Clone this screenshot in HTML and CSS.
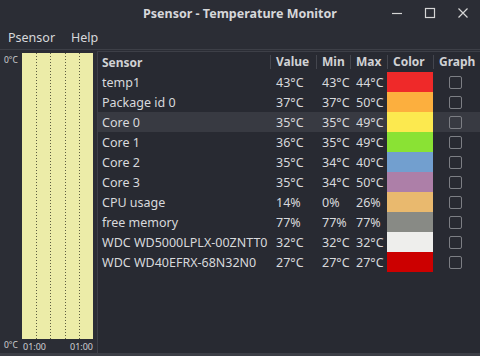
FILE: index.html
```html
<!DOCTYPE html>
<html>
<head>
<meta charset="utf-8">
<link rel="stylesheet" href="styles.css">
</head>
<body>
<div class="window">
  <div class="titlebar">
    <div></div>
    <div class="title">Psensor - Temperature Monitor</div>
    <div class="controls">
      <svg width="14" height="14" viewBox="0 0 14 14"><path d="M2 7.5h10" stroke="#d6d6d6" stroke-width="1.2"/></svg>
      <svg width="14" height="14" viewBox="0 0 14 14"><rect x="2.5" y="2.5" width="9" height="9" fill="none" stroke="#d6d6d6" stroke-width="1.2"/></svg>
      <svg width="14" height="14" viewBox="0 0 14 14"><path d="M2.5 2.5l9 9M11.5 2.5l-9 9" stroke="#d6d6d6" stroke-width="1.2"/></svg>
    </div>
  </div>
  <div class="menubar">
    <span class="menu">Psensor</span>
    <span class="menu">Help</span>
  </div>
  <div class="main">
    <div class="graphpane">
      <div class="ylabels">
        <span>0°C</span>
        <span>0°C</span>
      </div>
      <div class="graphcol">
        <div class="graph">
          <i></i><i></i><i></i><i></i>
        </div>
        <div class="xlabels"><span>01:00</span><span>01:00</span></div>
      </div>
    </div>
    <div class="tablepane">
      <div class="row head">
        <div class="c sensor">Sensor</div>
        <div class="c sep">Value</div>
        <div class="c sep">Min</div>
        <div class="c sep">Max</div>
        <div class="c sep">Color</div>
        <div class="c sep">Graph</div>
      </div>
      <div class="row"><div class="c sensor">temp1</div><div class="c">43°C</div><div class="c">43°C</div><div class="c">44°C</div><div class="sw red"></div><div class="chk"><span></span></div></div>
      <div class="row"><div class="c sensor">Package id 0</div><div class="c">37°C</div><div class="c">37°C</div><div class="c">50°C</div><div class="sw orange"></div><div class="chk"><span></span></div></div>
      <div class="row sel"><div class="c sensor">Core 0</div><div class="c">35°C</div><div class="c">35°C</div><div class="c">49°C</div><div class="sw yellow"></div><div class="chk"><span></span></div></div>
      <div class="row"><div class="c sensor">Core 1</div><div class="c">36°C</div><div class="c">35°C</div><div class="c">49°C</div><div class="sw green"></div><div class="chk"><span></span></div></div>
      <div class="row"><div class="c sensor">Core 2</div><div class="c">35°C</div><div class="c">34°C</div><div class="c">40°C</div><div class="sw blue"></div><div class="chk"><span></span></div></div>
      <div class="row"><div class="c sensor">Core 3</div><div class="c">35°C</div><div class="c">34°C</div><div class="c">50°C</div><div class="sw plum"></div><div class="chk"><span></span></div></div>
      <div class="row"><div class="c sensor">CPU usage</div><div class="c">14%</div><div class="c">0%</div><div class="c">26%</div><div class="sw choc"></div><div class="chk"><span></span></div></div>
      <div class="row"><div class="c sensor">free memory</div><div class="c">77%</div><div class="c">77%</div><div class="c">77%</div><div class="sw gray"></div><div class="chk"><span></span></div></div>
      <div class="row"><div class="c sensor">WDC WD5000LPLX-00ZNTT0</div><div class="c">32°C</div><div class="c">32°C</div><div class="c">32°C</div><div class="sw white"></div><div class="chk"><span></span></div></div>
      <div class="row"><div class="c sensor">WDC WD40EFRX-68N32N0</div><div class="c">27°C</div><div class="c">27°C</div><div class="c">27°C</div><div class="sw dred"></div><div class="chk"><span></span></div></div>
    </div>
  </div>
</div>
</body>
</html>
```

FILE: styles.css
```css
* { box-sizing: border-box; }
html, body { margin: 0; padding: 0; }
body {
  width: 480px;
  height: 356px;
  background: #2b2d35;
  font-family: "Noto Sans", "DejaVu Sans", sans-serif;
  color: #d8d9dc;
  overflow: hidden;
}
.window {
  height: 356px;
  display: flex;
  flex-direction: column;
  border-bottom: 3px solid #3c3e46;
}
.titlebar {
  height: 26px;
  display: grid;
  grid-template-columns: 1fr auto 1fr;
  align-items: center;
}
.title {
  font-weight: bold;
  font-size: 12.5px;
  color: #d6d7da;
}
.controls {
  display: flex;
  justify-content: flex-end;
  gap: 19px;
  padding-right: 10px;
}
.menubar {
  height: 24px;
  display: flex;
  align-items: center;
  gap: 16px;
  padding-left: 8px;
  font-size: 12.5px;
  border-bottom: 1px solid #3d3f47;
}
.main {
  flex: 1;
  display: flex;
  min-height: 0;
}
.graphpane {
  width: 97px;
  display: flex;
  padding: 3px 4px 0 3px;
}
.ylabels {
  width: 19px;
  display: flex;
  flex-direction: column;
  justify-content: space-between;
  font-size: 8.5px;
  color: #cfd0d3;
  padding: 1px 0 3px 1px;
}
.graphcol {
  flex: 1;
  display: flex;
  flex-direction: column;
}
.graph {
  height: 287px;
  background: #ececa8;
  display: flex;
  justify-content: space-between;
  padding: 0 13px 0 14px;
}
.graph i {
  width: 1px;
  background: repeating-linear-gradient(to bottom, #5d5d40 0 1px, transparent 1px 3px);
}
.xlabels {
  display: flex;
  justify-content: space-between;
  font-size: 9px;
  color: #cfd0d3;
  padding: 1px 0 0 1px;
}
.tablepane {
  flex: 1;
  margin: 1px 0 0 0;
  border-left: 1px solid #3d3f47;
  border-top: 1px solid #3d3f47;
  background: #282a32;
  font-size: 12.5px;
}
.row {
  display: grid;
  grid-template-columns: 172px 46px 34px 37px 46px 1fr;
  height: 20px;
  align-items: center;
}
.row.head {
  height: 20px;
  font-weight: bold;
  font-size: 12px;
  color: #d0d1d4;
}
.row.sel { background: #383a42; }
.c {
  padding-left: 6px;
  white-space: nowrap;
}
.c.sensor { padding-left: 4px; }
.head .sep {
  border-left: 1px solid #44464e;
  padding-left: 5px;
  line-height: 14px;
}
.sw { height: 20px; }
.red { background: #ef2929; }
.orange { background: #fcaf3e; }
.yellow { background: #fce94f; }
.green { background: #8ae234; }
.blue { background: #729fcf; }
.plum { background: #ad7fa8; }
.choc { background: #e9b96e; }
.gray { background: #888a85; }
.white { background: #eeeeec; }
.dred { background: #cc0000; }
.chk {
  display: flex;
  justify-content: center;
  padding-right: 2px;
}
.chk span {
  width: 13px;
  height: 13px;
  border: 1px solid #7c7e84;
  border-radius: 2px;
}
```
